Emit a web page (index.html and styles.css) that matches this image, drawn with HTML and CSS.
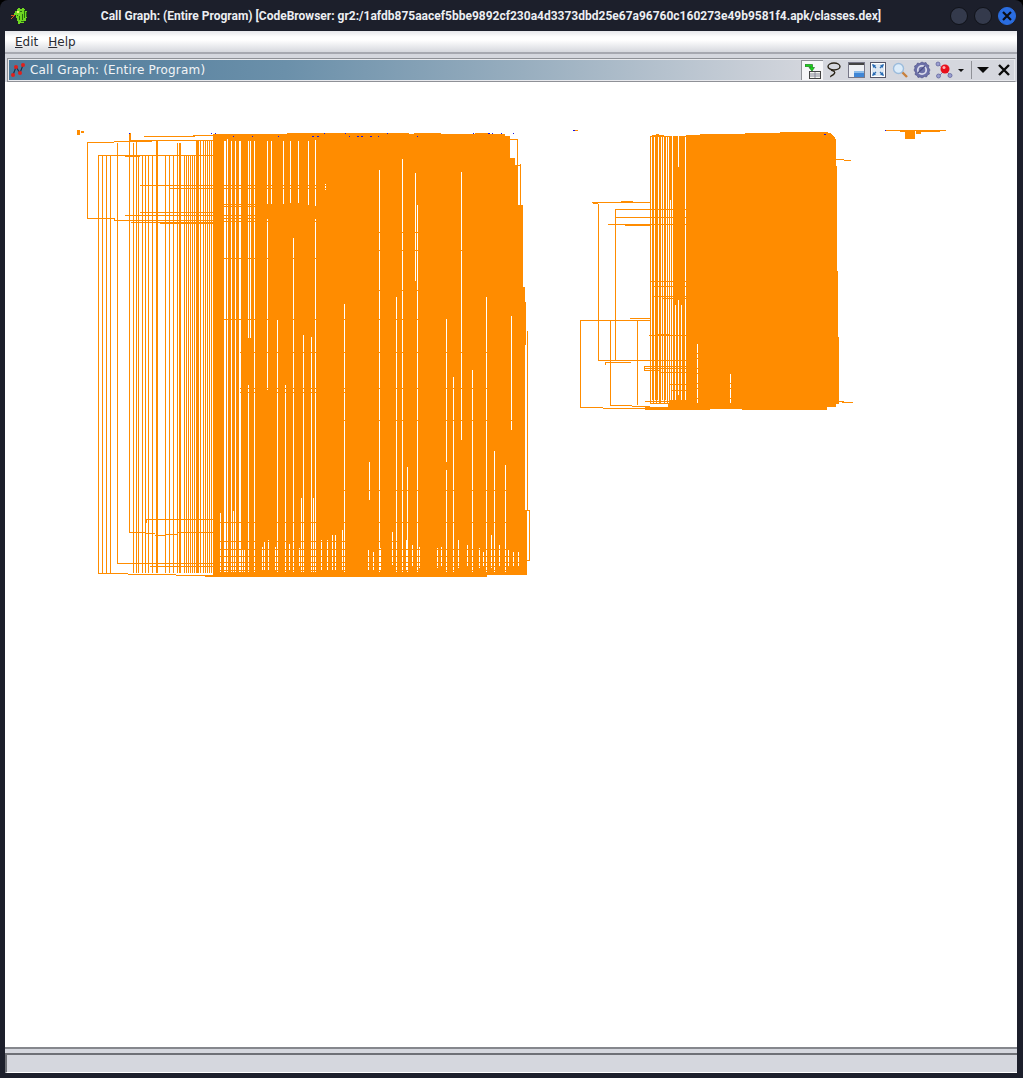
FILE: index.html
```html
<!DOCTYPE html>
<html lang="en">
<head>
    <meta charset="UTF-8">
    <title>Call Graph: (Entire Program)</title>
    <link rel="stylesheet" href="styles.css">
</head>
<body>
    <div class="window">
        <div class="titlebar">
            <svg class="app-icon" width="17" height="17" viewBox="0 0 17 17" shape-rendering="crispEdges">
                <path fill="#6fd622" d="M7 1h2v1h2V1h2v1h1v2h2v7h-1v3h-2v2H9v1H7v-3H6v-3H5V8H3V6h1V4h2V2h1z"/>
                <path fill="#256b10" d="M9 4h2v1H9zM13 3h1v8h-1zM11 7h1v6h-1zM8 9h1v4H8zM15 5h1v5h-1zM6 8h1v1H6zM10 14h3v1h-3z"/>
                <path fill="#f0f07c" d="M6 4h2v2H6z"/>
                <path fill="#d9541e" d="M0 8h4v1H3v1H2v1H1v1H0v-1h1v-1h1V9H0z"/>
            </svg>
            <div class="title">Call Graph: (Entire Program) [CodeBrowser: gr2:/1afdb875aacef5bbe9892cf230a4d3373dbd25e67a96760c160273e49b9581f4.apk/classes.dex]</div>
            <div class="controls">
                <span class="ctl"></span>
                <span class="ctl"></span>
                <span class="ctl close">
                    <svg width="10" height="10" viewBox="0 0 10 10"><path d="M1 1l8 8M9 1l-8 8" stroke="#0c0e16" stroke-width="2.2"/></svg>
                </span>
            </div>
        </div>

        <div class="content">
            <div class="menubar">
                <span class="menu"><u>E</u>dit</span>
                <span class="menu"><u>H</u>elp</span>
            </div>
            <div class="menu-line"></div>

            <div class="panel">
                <div class="panel-head">
                    <div class="panel-title">
                        <svg width="16" height="16" viewBox="0 0 16 16">
                            <path d="M3 13L6 5l4 6 3-8" fill="none" stroke="#20304a" stroke-width="1.2"/>
                            <g fill="#e0201c"><circle cx="3" cy="13" r="2"/><circle cx="6" cy="5" r="2"/><circle cx="10" cy="11" r="2"/><circle cx="13" cy="3" r="2"/></g>
                        </svg>
                        <span>Call Graph: (Entire Program)</span>
                    </div>
                    <div class="toolbar">
                        <span class="tool selected">
                            <svg width="16" height="16" viewBox="0 0 16 16">
                                <rect x="4.5" y="8.5" width="11" height="7" fill="#f4f4ee" stroke="#444"/>
                                <path d="M5 11h10M5 13h10M10 9v6" stroke="#889" stroke-width="1"/>
                                <path d="M0 1.500h7.500v3h2L7 8 4 4.500h2V3.500H0z" fill="#19d619" stroke="#0a6a0a" stroke-width=".6"/>
                            </svg>
                        </span>
                        <span class="tool">
                            <svg width="16" height="16" viewBox="0 0 16 16" fill="none" stroke="#2a2418" stroke-width="1.400">
                                <ellipse cx="8" cy="4.500" rx="6" ry="3.500"/>
                                <path d="M5 8c3 1 5 2 3 4s-4 2-3 3"/>
                            </svg>
                        </span>
                        <span class="tool">
                            <svg width="17" height="16" viewBox="0 0 17 16">
                                <rect x=".5" y=".5" width="16" height="15" fill="#eef0f4" stroke="#778"/>
                                <rect x="1" y="1" width="15" height="2" fill="#444"/>
                                <rect x="6" y="9" width="10" height="6" fill="#3f86d6"/>
                                <rect x="6" y="9" width="10" height="2" fill="#8cbcea"/>
                            </svg>
                        </span>
                        <span class="tool">
                            <svg width="16" height="16" viewBox="0 0 16 16">
                                <rect x=".5" y=".5" width="15" height="15" fill="#fff" stroke="#556"/>
                                <rect x="2" y="2" width="12" height="12" fill="#dfe8f2"/>
                                <path d="M2 2l4 1.500L3.500 6zM14 2l-1.500 4L10 3.500zM2 14l1.500-4L6 12.500zM14 14l-4-1.500 2.500-2.500z" fill="#2a6cb4"/>
                                <path d="M3 3l3 3M13 3l-3 3M3 13l3-3M13 13l-3-3" stroke="#2a6cb4" stroke-width="1.300"/>
                            </svg>
                        </span>
                        <span class="tool">
                            <svg width="16" height="16" viewBox="0 0 16 16">
                                <path d="M10 10l5 5" stroke="#c8803c" stroke-width="2.400"/>
                                <circle cx="6.500" cy="6.500" r="5" fill="#dcecfa" stroke="#9cbcdc" stroke-width="1.400"/>
                            </svg>
                        </span>
                        <span class="tool">
                            <svg width="18" height="18" viewBox="0 0 18 18">
                                <path d="M9 1l2 1 2-.5 1 2 2 1-.5 2L17 9l-1 2 .5 2-2 1-1 2-2-.5L9 17l-2-1-2 .5-1-2-2-1 .5-2L1 9l1-2-.5-2 2-1 1-2 2 .5z" fill="#6c70a8" stroke="#4a4e84" stroke-width=".6"/>
                                <circle cx="9" cy="9" r="4.200" fill="none" stroke="#d8daea" stroke-width="1.800"/>
                                <path d="M5 12l7-7" stroke="#4a4e84" stroke-width="1.200"/>
                            </svg>
                        </span>
                        <span class="tool">
                            <svg width="18" height="18" viewBox="0 0 18 18">
                                <path d="M3 3l7 6-6 6M10 9l5 5" stroke="#7c80b4" stroke-width="1" fill="none"/>
                                <g fill="#9a9ed0" stroke="#5a5e98" stroke-width=".7"><circle cx="3" cy="3" r="2"/><circle cx="3.500" cy="15" r="2"/><circle cx="15" cy="14.500" r="2"/></g>
                                <circle cx="10" cy="8" r="4.500" fill="#e8101c"/>
                                <circle cx="9" cy="6.500" r="1.500" fill="#ffb0b0"/>
                            </svg>
                        </span>
                        <span class="caret-small"></span>
                        <span class="tool-sep"></span>
                        <span class="caret-big"></span>
                        <svg class="panel-close" width="12" height="12" viewBox="0 0 12 12"><path d="M1 1l10 10M11 1L1 11" stroke="#0a0a0a" stroke-width="2.400"/></svg>
                    </div>
                </div>

                <div class="graph">
                    <svg class="graph-svg" width="1012" height="965" viewBox="5 82 1012 965" shape-rendering="crispEdges">
                        <!-- left cluster, solid part -->
                        <path class="fill" d="M213 134H287V133H409V134H414V133H441V134H475V133H490V134H505V136H510V158H515V165H518V205H523V287H525V510H527V575H487V577H205V575H213z"/>
                        <!-- right cluster, solid part -->
                        <path class="fill" d="M668 136H686V135H700V134H745V133H780V132H825L830 133L834 136L836 140V166H837V271H838V337H839V404H836V407H827V410H742V409H710V410H645V407H668z"/>
                        <path class="fill" d="M905 131H915V139H905zM916 131H921V134H916zM77 130H80V135H77zM81 131H84V133H81zM650 136H652V135H656V134H659V135H664V136H668V400H650z"/>

                        <!-- gaps through the left block -->
                        <path class="gap" d="M224.500 141V572M225.500 141V572M227.500 139V572M231.500 141V572M235.500 141V572M239.500 141V572M240.500 141V572
                            M248.500 141V338M250.500 141V338M248.500 385V572M254.500 141V572M267.500 141V205M271.500 141V205M283.500 141V204M290.500 141V203M298.500 141V203M308.500 141V205M315.500 140V206M315.500 218V572M267.500 219V390M325.500 184V190
                            M277.500 319V572M285.500 385V572M293.500 238V572M303.500 335V572M311.500 337V572M344.500 304V572
                            M396.500 297V572M402.500 159V572M407.500 467V572M415.500 173V281M417.500 205V572M446.500 319V462M446.500 470V572M453.500 377V572
                            M461.500 172V440M472 370V572M486.500 297V572M494.500 451V572M505.500 465V572M511.500 316V430M369.500 462V500M301.500 498V572M313.500 498V572M379.500 170V572
                            M220.500 513V572M233.500 511V572M242.500 550V572M244.500 550V572"/>

                        <!-- short gaps near the bottom edge -->
                        <path class="gap" d="M262.500 547V570M264.500 541V570M268.500 540V570M275.500 547V570M289.500 544V570M299.500 548V566M321.500 540V570M327.500 540V570M332.500 535V570M335.500 535V570M342.500 530V570
                            M368.500 550V570M373.500 552V570M380.500 548V570M392.500 532V565M406 540V570M412.500 545V566M419.500 547V568M437.500 548V568M441.500 547V566M458.500 540V568M467.500 545V566M479.500 548V568M483.500 552V566M491.500 535V568M499.500 545V566M508.500 550V566M513.500 552V566M518.500 552V566"/>

                        <!-- orange bars across the gaps -->
                        <path class="line" d="M213 185.500H330M213 188.500H330M213 206.500H320M213 215.500H320M213 218.500H320M213 221.500H320M213 204.500H300M213 258.500H330M213 319.500H420
                            M240 352.500H500M330 420.500H520M240 388.500H500M240 392.500H350M213 522.500H520M213 549.500H520M213 556.500H520M213 562.500H520M213 566.500H520M213 570.500H520M213 541.500H400M340 490.500H520M379 250.500H470M379 290.500H420M379 232.500H420"/>

                        <!-- left cluster, lines -->
                        <path class="line" d="M98.500 155V573.500M102.500 155V573M106.500 155V573M110.500 155V573M117.500 143V563.500M129.500 133V533M133.500 143V573M136.500 141V573M138.500 155V573M142.500 155V573M145.500 155V573M148.500 155V573M152.500 155V573M156.500 141V573M157.500 141V573M165.500 155V573M169.500 155V573M173.500 155V573M177.500 143V573M179.500 143V573M180.500 143V573M184.500 155V573M186.500 155V573M188.500 155V573M190.500 155V573M192.500 155V573M194.500 155V573M196.500 140V573M197.500 140V573M198.500 140V573M200.500 140V573M203.500 140V573M205.500 140V573M207.500 140V573M209.500 140V573M211.500 140V573
                            M87.500 142V218.500M87 142.500H114M98 155.500H213M114 141.500H152M130 140.500H213M144 136.500H195M193 135.500H213M87 218.500H114M114.500 218V221M114 220.500H213M125 155.500H213M125 156.500H140M140 185.500H213M140 212.500H213M125 215.500H213M131 222.500H213M160 223.500H213M170 188.500H213M146.500 519V523M146 519.500H213M129 532.500H145M145 533.500H155M155 535.500H165M165 534.500H178M178 532.500H213M117 563.500H213M150 566.500H213M98 573.500H128M128 574.500H176M176 575.500H205
                            M517.500 139V165M520.500 164V206M525.500 302V345M527.500 331V510M529.500 510V560M520 510.500H530M520 560.500H530M510 165.500H520M510 139.500H518M130 133V140"/>

                        <!-- right cluster, gaps -->
                        <path class="gap" d="M672.500 167V400M678.500 135V167M678.500 300V395M672.500 135V167M685 137V400"/>
                        <path class="gap-dash" d="M697.500 344V404M730.500 374V404"/>

                        <!-- right cluster, lines -->
                        <path class="gap" d="M651.500 137V404M654.500 137V404M658.500 137V404M661.500 137V404M663 137V404M666 137V404M668 137V404M670 200V400M675.500 305V400M681 305V400"/>
                        <path class="line" d="M650.500 136V404M653.500 136V404M656.500 136V404M659.500 136V404M664.500 136V404M667.500 136V404M660 281V404
                            M580.500 320V407.500M580 320.500H650M592 202.500H650M621 201.500H633M598.500 204V360.500M593 203.500H598M615.500 209V360.500M615 209.500H686M615 217.500H686M608 224.500H686M625 225.500H650M598 360.500H686M605 362.500H631M605.500 362V365M610.500 320V405.500M610 320.500H640M630 318.500H650M637.500 320V405M610 405.500H632M632 406.500H650M580 407.500H603M603 408.500H645M650 281.500H686M654 286.500H686M654 296.500H686M662 298.500H686M649 335.500H686M655 334.500H670M644 368.500H686M644.500 367V370M644 366.500H686M644 370.500H660M659 372.500H686M670 384.500H686M671 390.500H686M645 401.500H686M650 403.500H686M836 159.500H844M844 160.500H851M838 401.500H844M842 402.500H853M885 130.500H946M900 131.500H915M921 131.500H940"/>
                        <path class="line" d="M575 130.500H578"/>

                        <!-- blue nodes -->
                        <path class="node" d="M129 133h1v1h-1zM211 133h1v1h-1zM215 133h1v1h-1zM233 136h1v1h-1zM252 136h1v1h-1zM278 136h1v1h-1zM312 136h2v1h-2zM317 136h2v1h-2zM324 133h1v1h-1zM345 133h1v1h-1zM349 136h1v1h-1zM357 136h2v1h-2zM361 136h2v1h-2zM370 136h2v1h-2zM378 136h1v1h-1zM387 133h1v1h-1zM417 136h1v1h-1zM473 133h1v1h-1zM488 133h2v1h-2zM492 133h1v1h-1zM501 133h1v1h-1zM513 133h1v1h-1zM573 130h2v1h-2zM824 134h2v1h-2zM885 130h1v1h-1z"/>
                    </svg>
                </div>
            </div>

            <div class="status-line"></div>
            <div class="statusbar"></div>
        </div>
    </div>
</body>
</html>
```

FILE: styles.css
```css
* {
    box-sizing: border-box;
}

body {
    margin: 0;
    background-color: #000;
    font-family: "DejaVu Sans", sans-serif;
}

.window {
    width: 1023px;
    height: 1078px;
    background-color: #1c1f2b;
    border-radius: 8px 8px 0 0;
    padding: 0 6px 5px 5px;
    display: flex;
    flex-direction: column;
    overflow: hidden;
}

/* Title bar */
.titlebar {
    height: 31px;
    flex: none;
    display: flex;
    align-items: center;
    margin-right: -1px;
}

.app-icon {
    margin-left: 6px;
    flex: none;
}

.title {
    flex: 1;
    text-align: center;
    color: #eceef2;
    font-family: "Roboto", sans-serif;
    font-weight: 700;
    font-size: 12px;
    white-space: nowrap;
    padding-left: 4px;
}

.controls {
    display: flex;
    gap: 6px;
    margin-right: 2px;
}

.ctl {
    width: 18px;
    height: 18px;
    border-radius: 50%;
    background-color: #343a4c;
    border: 1px solid #101219;
    display: flex;
    align-items: center;
    justify-content: center;
}

.close {
    background-color: #2a6de0;
    border-color: #2a6de0;
}

.content {
    flex: 1;
    display: flex;
    flex-direction: column;
    background-color: #d5d7de;
    min-height: 0;
}

/* Menu */
.menubar {
    height: 21px;
    flex: none;
    background: linear-gradient(#e6e7eb 0, #ffffff 6px, #ffffff 9px, #d6d8de 100%);
    display: flex;
    align-items: center;
    padding: 1px 0 0 10px;
    gap: 10px;
    font-size: 12px;
    color: #2a2c33;
}

.menu-line {
    height: 6px;
    flex: none;
    border-top: 2px solid #a6a8b0;
    background-color: #d5d7de;
}

/* Docked panel */
.panel {
    flex: 1;
    display: flex;
    flex-direction: column;
    min-height: 0;
}

.panel-head {
    height: 24px;
    flex: none;
    margin: 0 1px 0 2px;
    border: 1px solid #8f9197;
    border-right-color: #d5d7de;
    outline: 1px solid #e8e9ed;
    outline-offset: -2px;
    display: flex;
    background-color: #d5d7de;
}

.panel-title {
    flex: 1;
    display: flex;
    align-items: center;
    gap: 4px;
    padding-left: 2px;
    color: #f2f4f6;
    font-size: 12px;
    letter-spacing: .19px;
    background: linear-gradient(90deg, #4d7999 0, #6b90aa 35%, #98aebf 65%, #d2d5dc 100%);
}

.toolbar {
    width: 214px;
    flex: none;
    display: flex;
    align-items: center;
    background-color: #d5d7de;
}

.tool {
    width: 22px;
    height: 20px;
    display: flex;
    align-items: center;
    justify-content: center;
    flex: none;
}

.selected {
    background-color: #f6f6f8;
    border-left: 1px solid #8f9197;
    border-top: 1px solid #8f9197;
}

.caret-small {
    width: 0;
    height: 0;
    margin-left: 3px;
    border-left: 3px solid transparent;
    border-right: 3px solid transparent;
    border-top: 3px solid #111;
}

.tool-sep {
    width: 1px;
    height: 18px;
    margin: 0 5px 0 7px;
    background-color: #8f9197;
}

.caret-big {
    width: 0;
    height: 0;
    border-left: 6px solid transparent;
    border-right: 6px solid transparent;
    border-top: 6px solid #0a0a0a;
}

.panel-close {
    margin-left: 9px;
}

/* Call graph canvas */
.graph {
    flex: 1;
    background-color: #fff;
    min-height: 0;
    overflow: hidden;
}

.graph-svg {
    display: block;
}

.fill {
    fill: #ff8c00;
}

.line {
    fill: none;
    stroke: #ff8c00;
    stroke-width: 1;
}

.gap {
    fill: none;
    stroke: #fff;
    stroke-width: 1;
}

.gap-dash {
    fill: none;
    stroke: #fff;
    stroke-width: 1;
    stroke-dasharray: 9 1 4 1;
}

.node {
    fill: #1414e6;
}

/* Status bar */
.status-line {
    height: 6px;
    flex: none;
    border-top: 2px solid #85878d;
    background-color: #d5d7de;
}

.statusbar {
    height: 20px;
    flex: none;
    background-color: #d5d7de;
    border-top: 2px solid #6e7076;
    border-left: 2px solid #6e7076;
    border-bottom: 1px solid #fff;
}
```
